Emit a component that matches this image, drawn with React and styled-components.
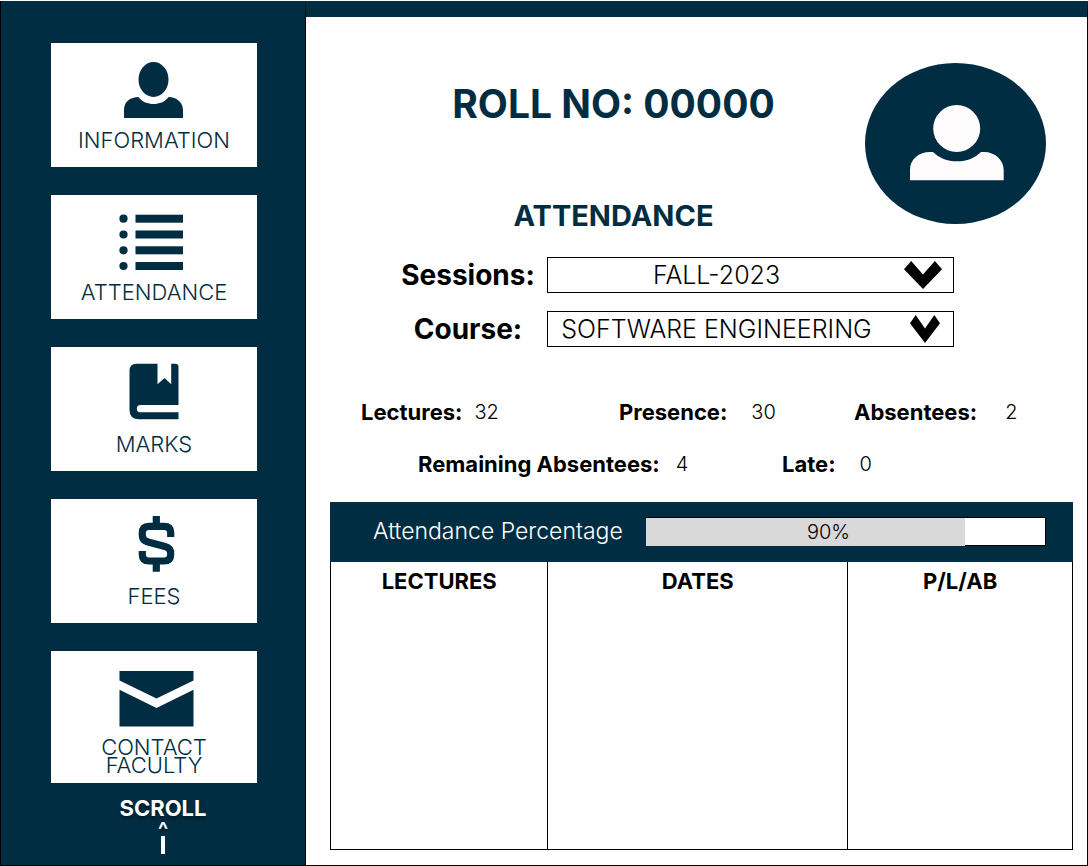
import React from "react";
import styled, { createGlobalStyle } from "styled-components";

const navy = "#002d42";

const GlobalStyle = createGlobalStyle`
  *, *::before, *::after { box-sizing: border-box; }
  body { margin: 0; background: #fff; }
  body, button, select { font-family: Inter, "Open Sans", sans-serif; }
`;

const Page = styled.div`
  display: grid;
  grid-template-columns: 305px 1fr;
  min-height: 100vh;
  padding-top: 1px;
  color: #000;
`;

const Sidebar = styled.nav`
  display: flex;
  flex-direction: column;
  align-items: center;
  padding: 42px 0 0 2px;
  background: ${navy};
  border: solid #000;
  border-width: 0 0 1px 1px;
`;

const TileList = styled.div`
  display: flex;
  flex-direction: column;
  gap: 28px;
  width: 206px;
`;

const Tile = styled.button`
  display: flex;
  flex-direction: column;
  align-items: center;
  gap: 11px;
  min-height: 124px;
  padding: 16px 40px 9px;
  border: 0;
  background: #fff;
  color: ${navy};
  cursor: pointer;
`;

const TileIcon = styled.svg`
  width: 80px;
  height: 60px;
  fill: currentColor;
`;

const TileLabel = styled.span`
  display: grid;
  place-items: center;
  min-height: 20px;
  font-size: 22px;
  font-weight: 300;
  line-height: 18px;
`;

const ScrollButton = styled.button`
  display: flex;
  flex-direction: column;
  align-items: center;
  margin-left: 18px;
  padding: 15px 0 0;
  border: 0;
  background: none;
  color: #fff;
  font-size: 22px;
  font-weight: 700;
  line-height: 20px;
  text-shadow: 0 3px 3px rgba(0, 0, 0, 0.35);
  cursor: pointer;
`;

const ScrollCaret = styled.span`
  padding-top: 6px;
  font-weight: 600;
  line-height: 12px;
`;

const ScrollStem = styled.span`
  width: 4px;
  height: 18px;
  background: #fff;
`;

const Main = styled.main`
  display: flex;
  flex-direction: column;
  border: 1px solid #000;
  border-top: 16px solid ${navy};
`;

const Header = styled.header`
  display: grid;
  grid-template-columns: 1fr 181px;
  padding: 46px 41px 0 56px;
`;

const Titles = styled.div`
  display: flex;
  flex-direction: column;
  align-items: center;
  gap: 72px;
  padding-top: 17px;
  color: ${navy};
`;

const RollNumber = styled.h1`
  margin: 0;
  font-size: 39px;
  font-weight: 700;
  line-height: 48px;
`;

const SectionTitle = styled.h2`
  margin: 0;
  font-size: 29px;
  font-weight: 700;
  line-height: 32px;
`;

const Avatar = styled.svg`
  width: 181px;
  height: 161px;
`;

const Filters = styled.form`
  display: grid;
  grid-template-columns: 134px 1fr;
  align-items: center;
  gap: 18px 12px;
  padding: 25px 133px 0 95px;
`;

const FilterLabel = styled.label`
  font-size: 28px;
  font-weight: 700;
  line-height: 36px;
  text-align: center;
  white-space: nowrap;
`;

const SelectBox = styled.div`
  display: grid;
  align-items: center;
`;

const Select = styled.select`
  grid-area: 1 / 1;
  width: 100%;
  height: 36px;
  padding: 0 68px 0 0;
  appearance: none;
  border: 1px solid #000;
  border-radius: 0;
  background: #fff;
  color: #000;
  font-size: 25px;
  font-weight: 300;
  text-align-last: center;
`;

const Chevron = styled.svg`
  grid-area: 1 / 1;
  justify-self: end;
  width: ${(p) => (p.$narrow ? 30 : 38)}px;
  height: 28px;
  margin-right: ${(p) => (p.$narrow ? 14 : 12)}px;
  pointer-events: none;
`;

const Stats = styled.dl`
  display: flex;
  flex-direction: column;
  gap: 28px;
  margin: 0;
  padding: 53px 0 26px;
`;

const StatRow = styled.div`
  display: grid;
  grid-template-columns: ${(p) => p.$columns};
  padding-left: ${(p) => p.$indent}px;
`;

const Stat = styled.div`
  display: flex;
  gap: ${(p) => p.$gap}px;
  font-size: 22px;
  line-height: 24px;
  white-space: nowrap;
`;

const StatName = styled.dt`
  font-weight: 700;
`;

const StatValue = styled.dd`
  margin: 0;
  font-size: 20px;
  font-weight: 300;
`;

const Record = styled.section`
  display: flex;
  flex: 1;
  flex-direction: column;
  margin: 0 14px 15px 24px;
`;

const Summary = styled.div`
  display: grid;
  grid-template-columns: 248px 1fr;
  align-items: center;
  gap: 25px;
  height: 60px;
  padding: 0 27px 2px 43px;
  background: ${navy};
`;

const SummaryLabel = styled.span`
  color: #fff;
  font-size: 23px;
  font-weight: 300;
  line-height: 24px;
  white-space: nowrap;
`;

const Meter = styled.div`
  display: grid;
  height: 29px;
  border: 1px solid #000;
  border-left: 0;
  background: #fff;
`;

const MeterFill = styled.div`
  grid-area: 1 / 1;
  width: 80%;
  background: #d9d9d9;
`;

const MeterText = styled.span`
  grid-area: 1 / 1;
  padding-right: 34px;
  font-size: 20px;
  font-weight: 300;
  line-height: 28px;
  text-align: center;
`;

const Table = styled.table`
  flex: 1;
  width: 100%;
  border-collapse: collapse;
  table-layout: fixed;
`;

const HeadCell = styled.th`
  width: ${(p) => p.$width};
  height: 38px;
  padding: 0;
  border: solid #000;
  border-width: 0 1px;
  font-size: 22px;
  font-weight: 700;
  line-height: 24px;
`;

const Cell = styled.td`
  border: solid #000;
  border-width: 0 1px 1px;
`;

const tiles = [
  {
    label: "INFORMATION",
    icon: (
      <>
        <ellipse cx="39.5" cy="20.5" rx="15" ry="17.5" />
        <path d="M10 59V51C10 43 16 38 24.500 38C28 43 34 45 39.500 45S51 43 54.500 38C63 38 69 44 69 51V59Z" />
      </>
    ),
  },
  {
    label: "ATTENDANCE",
    icon: [7.7, 23.5, 39.3, 55].map((y) => (
      <React.Fragment key={y}>
        <circle cx="9.5" cy={y} r="4.100" />
        <rect x="21.5" y={y - 4} width="47.500" height="8" />
      </React.Fragment>
    )),
  },
  {
    label: "MARKS",
    icon: (
      <path d="M22.500 .7H43.500V21.300L50.500 15L57.200 21.300V.7H61Q64.500 .7 64.500 4V42H26.500a3.650 3.650 0 0 0 0 7.300H64.500V56.300H25Q15.500 56.300 15.500 47V7.700Q15.500 .7 22.500 .7Z" />
    ),
  },
  {
    label: "FEES",
    icon: (
      <g fill="none" stroke="currentColor" strokeWidth="7.200">
        <path d="M56.700 22V17.500Q56.700 11.300 50 11.300H35Q28.300 11.300 28.300 18V20.500Q28.300 25.500 34 27L51 31.500Q56.700 33 56.700 38.500V39.500Q56.700 46 50 46H35Q28.300 46 28.300 39.500V36" />
        <path d="M42.300 1V11M42.300 46V56.700" />
      </g>
    ),
  },
  {
    label: "CONTACT FACULTY",
    icon: (
      <path d="M5.500 4H79.500V13.500L42.500 31.500L5.500 13.500ZM5.500 22.700L42.500 41L79.500 22.700V59.500H5.500Z" />
    ),
  },
];

function Filter({ id, label, value, narrow }) {
  return (
    <>
      <FilterLabel htmlFor={id}>{label}</FilterLabel>
      <SelectBox>
        <Select id={id} defaultValue={value}>
          <option>{value}</option>
        </Select>
        <Chevron $narrow={narrow} viewBox="0 0 37 27" preserveAspectRatio="none" aria-hidden="true">
          <path d="M7 0L18.500 13L30 0L37 8L18.500 27L0 8Z" />
        </Chevron>
      </SelectBox>
    </>
  );
}

function StatItem({ name, value, gap }) {
  return (
    <Stat $gap={gap}>
      <StatName>{name}</StatName>
      <StatValue>{value}</StatValue>
    </Stat>
  );
}

export default function App() {
  return (
    <>
      <GlobalStyle />
      <Page>
        <Sidebar>
          <TileList>
            {tiles.map((t) => (
              <Tile key={t.label} type="button">
                <TileIcon viewBox="0 0 80 60" aria-hidden="true">{t.icon}</TileIcon>
                <TileLabel>{t.label}</TileLabel>
              </Tile>
            ))}
          </TileList>
          <ScrollButton type="button">
            SCROLL
            <ScrollCaret>^</ScrollCaret>
            <ScrollStem />
          </ScrollButton>
        </Sidebar>
        <Main>
          <Header>
            <Titles>
              <RollNumber>ROLL NO: 00000</RollNumber>
              <SectionTitle>ATTENDANCE</SectionTitle>
            </Titles>
            <Avatar viewBox="0 0 181 161" role="img" aria-label="Student">
              <ellipse cx="90.500" cy="80.500" rx="90.500" ry="80.500" fill={navy} />
              <g fill="#fffcfd">
                <circle cx="91.700" cy="65.500" r="23.500" />
                <path d="M45 117.300V107C45 96 54 89 65 89H68C74 95 82 98.300 92 98.300S110 95 116 89H119C130 89 138.700 97 138.700 107V117.300Z" />
              </g>
            </Avatar>
          </Header>
          <Filters>
            <Filter id="session" label="Sessions:" value="FALL-2023" />
            <Filter id="course" label="Course:" value="SOFTWARE ENGINEERING" narrow />
          </Filters>
          <Stats>
            <StatRow $indent={55} $columns="258fr 235fr 233fr">
              <StatItem name="Lectures:" value="32" gap={12} />
              <StatItem name="Presence:" value="30" gap={24} />
              <StatItem name="Absentees:" value="2" gap={28} />
            </StatRow>
            <StatRow $indent={112} $columns="364fr 305fr">
              <StatItem name="Remaining Absentees:" value="4" gap={16} />
              <StatItem name="Late:" value="0" gap={24} />
            </StatRow>
          </Stats>
          <Record>
            <Summary>
              <SummaryLabel id="percentage">Attendance Percentage</SummaryLabel>
              <Meter role="meter" aria-labelledby="percentage" aria-valuemin={0} aria-valuemax={100} aria-valuenow={90}>
                <MeterFill />
                <MeterText>90%</MeterText>
              </Meter>
            </Summary>
            <Table>
              <thead>
                <tr>
                  <HeadCell $width="29.300%">LECTURES</HeadCell>
                  <HeadCell $width="40.400%">DATES</HeadCell>
                  <HeadCell $width="30.300%">P/L/AB</HeadCell>
                </tr>
              </thead>
              <tbody>
                <tr>
                  <Cell />
                  <Cell />
                  <Cell />
                </tr>
              </tbody>
            </Table>
          </Record>
        </Main>
      </Page>
    </>
  );
}
